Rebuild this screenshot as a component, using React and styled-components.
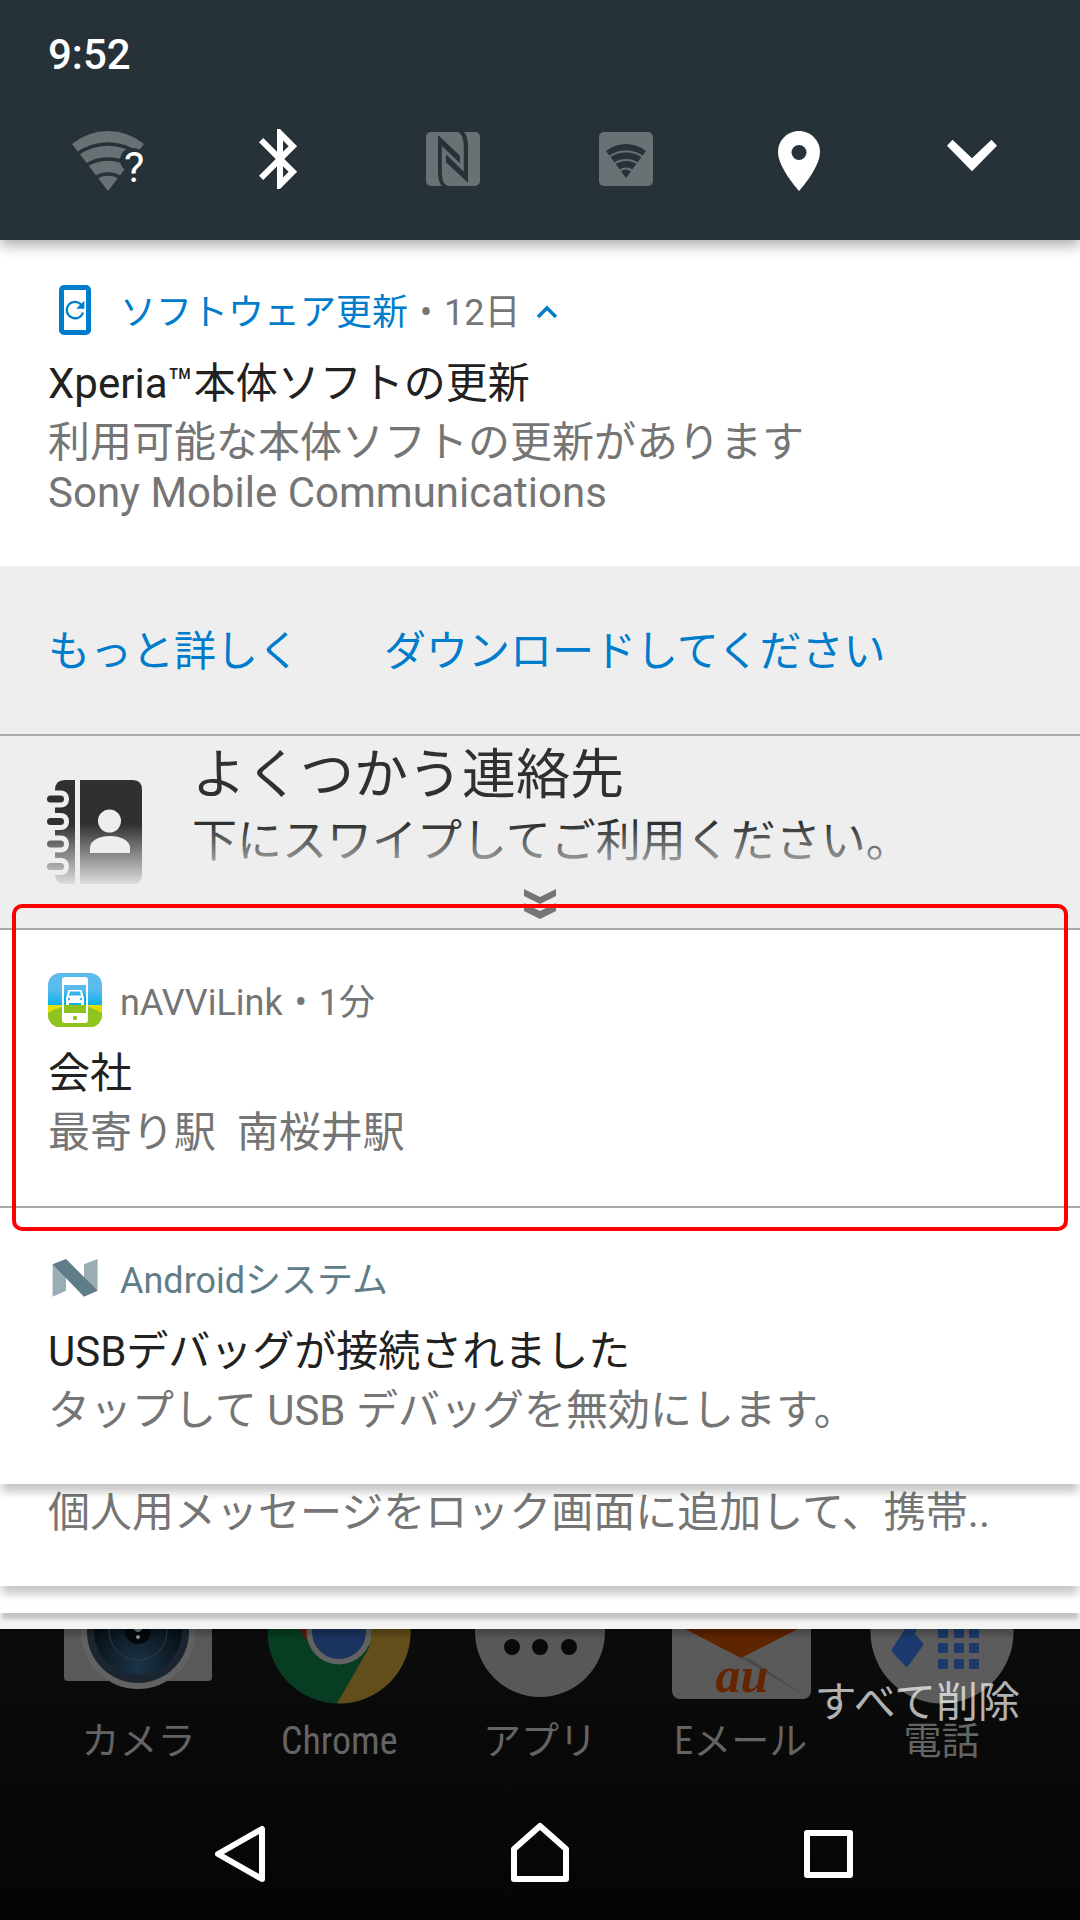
import styled, { createGlobalStyle } from "styled-components";

const App = () => {
    return (
        <Screen>
            <GlobalStyle/>
            <StatusHeader>
                <Clock>9:52</Clock>
                <QuickSettings>
                    <QuickButton type="button" aria-label="Wi-Fi"><WifiIcon/></QuickButton>
                    <QuickButton type="button" aria-label="Bluetooth"><BluetoothIcon/></QuickButton>
                    <QuickButton type="button" aria-label="NFC"><NfcIcon/></QuickButton>
                    <QuickButton type="button" aria-label="テザリング"><HotspotIcon/></QuickButton>
                    <QuickButton type="button" aria-label="位置情報"><LocationIcon/></QuickButton>
                    <QuickButton type="button" aria-label="展開"><ExpandIcon/></QuickButton>
                </QuickSettings>
            </StatusHeader>

            <Stack>
                <Card>
                    <CardHeader>
                        <UpdateIcon/>
                        <AppName $color="#007ccc">ソフトウェア更新</AppName>
                        <Dot>•</Dot>
                        <AppName>12日</AppName>
                        <CollapseButton type="button" aria-label="折りたたむ">
                            <svg width="24" height="14" viewBox="0 0 24 14">
                                <path d="M4 12l9-9 9 9" fill="none" stroke="#007ccc" strokeWidth="3.5"/>
                            </svg>
                        </CollapseButton>
                    </CardHeader>
                    <Title>Xperia™本体ソフトの更新</Title>
                    <Body>利用可能な本体ソフトの更新があります</Body>
                    <Body>Sony Mobile Communications</Body>
                </Card>
                <Actions>
                    <ActionButton type="button">もっと詳しく</ActionButton>
                    <ActionButton type="button">ダウンロードしてください</ActionButton>
                </Actions>

                <Contacts>
                    <ContactsRow>
                        <ContactsIcon/>
                        <ContactsText>
                            <ContactsTitle>よくつかう連絡先</ContactsTitle>
                            <ContactsBody>下にスワイプしてご利用ください。</ContactsBody>
                        </ContactsText>
                    </ContactsRow>
                    <Fade/>
                    <SwipeHint/>
                </Contacts>

                <Card $line>
                    <CardHeader>
                        <NaviIcon/>
                        <AppName>nAVViLink</AppName>
                        <Dot>•</Dot>
                        <AppName>1分</AppName>
                    </CardHeader>
                    <Title>会社</Title>
                    <Body>最寄り駅{"  "}南桜井駅</Body>
                    <Highlight/>
                </Card>

                <Card $raised>
                    <CardHeader>
                        <AndroidIcon/>
                        <AppName $color="#5f7d88">Androidシステム</AppName>
                    </CardHeader>
                    <Title>USBデバッグが接続されました</Title>
                    <Body>タップして USB デバッグを無効にします。</Body>
                </Card>

                <PeekCard>
                    <Body>個人用メッセージをロック画面に追加して、携帯..</Body>
                </PeekCard>
                <Edge $height={27} $color="#fff" $depth={3}/>
                <Edge $height={16} $color="#f3f3f3" $depth={2}/>
            </Stack>

            <Dock>
                <DockItem href="#camera"><CameraIcon/><DockLabel>カメラ</DockLabel></DockItem>
                <DockItem href="#chrome"><ChromeIcon/><DockLabel>Chrome</DockLabel></DockItem>
                <DockItem href="#apps"><AppsIcon/><DockLabel>アプリ</DockLabel></DockItem>
                <DockItem href="#mail"><MailIcon/><DockLabel>Eメール</DockLabel></DockItem>
                <DockItem href="#phone"><PhoneIcon/><DockLabel>電話</DockLabel></DockItem>
                <ClearAll type="button">すべて削除</ClearAll>
            </Dock>

            <NavBar>
                <NavButton type="button" aria-label="戻る">
                    <NavIcon viewBox="0 0 80 80">
                        <path d="M58 15v50L14 40z"/>
                    </NavIcon>
                </NavButton>
                <NavButton type="button" aria-label="ホーム">
                    <NavIcon viewBox="0 0 80 80">
                        <path d="M14 65V35L40 12l26 23v30z"/>
                    </NavIcon>
                </NavButton>
                <NavButton type="button" aria-label="履歴">
                    <NavIcon viewBox="0 0 80 80">
                        <path d="M11 19h43v42H11z"/>
                    </NavIcon>
                </NavButton>
            </NavBar>
        </Screen>
    )
};

export default App;

/* quick settings */

const WifiIcon = () => (
    <QuickSvg viewBox="0 0 72 72">
        <path d="M36 67L0 20Q16 7 36 7T72 20z" fill="#697174"/>
        <g fill="none" stroke="#263238" strokeWidth="3.5">
            <path d="M4 31Q18 20 36 20T68 31"/>
            <path d="M12 43Q22 35 36 35T60 43"/>
            <path d="M22 55Q28 50 36 50T50 55"/>
        </g>
        <circle cx="60" cy="36" r="12" fill="#263238"/>
        <text x="52" y="58" fill="#fff" stroke="#263238" strokeWidth="7" paintOrder="stroke" fontFamily="Roboto, sans-serif" fontSize="43">?</text>
    </QuickSvg>
);

const BluetoothIcon = () => (
    <QuickSvg viewBox="0 0 72 72">
        <path
            transform="translate(-1 -1) scale(3)"
            fill="#fff"
            d="M17.71 7.71L12 2h-1v7.59L6.41 5 5 6.41 10.59 12 5 17.59 6.41 19 11 14.41V22h1l5.710-5.710-4.300-4.290 4.300-4.290zM13 5.830l1.880 1.880L13 9.590V5.830zm1.880 10.460L13 18.170v-3.760l1.880 1.880z"
        />
    </QuickSvg>
);

const NfcIcon = () => (
    <QuickSvg viewBox="0 0 72 72">
        <rect x="8" y="8" width="54" height="54" rx="5" fill="#697174"/>
        <g transform="translate(-1 0)" fill="#263238">
            <path d="M21 11L43 31.700V39.300L24.800 22V46C24.800 55 26 60 31 62H25C22 59 21 54 21 46z"/>
            <path d="M51 58.700L29 38.300V30.300L46.800 47.700V24C46.800 15 45 10 41 8H47C50 11 51 16 51 24z"/>
        </g>
    </QuickSvg>
);

const HotspotIcon = () => (
    <QuickSvg viewBox="0 0 72 72">
        <rect x="9" y="8" width="54" height="54" rx="5" fill="#697174"/>
        <path d="M36 54L16 27Q25 20 36 20T56 27z" fill="#263238"/>
        <g fill="none" stroke="#697174" strokeWidth="2">
            <path d="M19 33Q26 27.500 36 27.500T53 33"/>
            <path d="M24 40Q29 36 36 36T48 40"/>
            <path d="M29 47.500Q32 44.500 36 44.500T43 47.500"/>
        </g>
    </QuickSvg>
);

const LocationIcon = () => (
    <QuickSvg viewBox="0 0 72 72">
        <path d="M36 7C24.400 7 15 16.400 15 28C15 43.750 36 67 36 67S57 43.750 57 28C57 16.400 47.600 7 36 7z" fill="#fff"/>
        <circle cx="36" cy="28.500" r="7.500" fill="#263238"/>
    </QuickSvg>
);

const ExpandIcon = () => (
    <QuickSvg viewBox="0 0 72 72">
        <path d="M16.500 15.700L36 34.300L55.500 15.700L61 21.700L36 47.300L11 21.700z" fill="#fff"/>
    </QuickSvg>
);

/* notification icons */

const UpdateIcon = () => (
    <AppSvg viewBox="0 0 54 54">
        <rect x="13.500" y="4.500" width="27" height="45" rx="2.500" fill="none" stroke="#007ccc" strokeWidth="5"/>
        <path
            transform="translate(13 13) scale(1.170)"
            fill="#007ccc"
            d="M17.650 6.350A7.958 7.958 0 0012 4c-4.420 0-7.990 3.580-7.990 8s3.570 8 7.990 8c3.730 0 6.840-2.550 7.730-6h-2.080A5.990 5.990 0 0112 18c-3.310 0-6-2.690-6-6s2.690-6 6-6c1.660 0 3.140.690 4.220 1.780L13 11h7V4z"
        />
    </AppSvg>
);

const NaviIcon = () => (
    <AppSvg viewBox="0 0 54 54">
        <defs>
            <linearGradient id="sky" x1="0" y1="0" x2="0" y2="1">
                <stop offset="0.3" stopColor="#5bbbec"/>
                <stop offset="0.6" stopColor="#08b0ee"/>
            </linearGradient>
            <clipPath id="tile"><rect width="54" height="54" rx="12"/></clipPath>
        </defs>
        <g clipPath="url(#tile)">
            <rect width="54" height="54" fill="url(#sky)"/>
            <rect y="32" width="54" height="22" fill="#dfe000"/>
            <path d="M0 40Q14 32 27 32T54 40V54H0z" fill="#8fc31f"/>
            <rect x="14" y="4" width="26" height="46" rx="3" fill="#fff"/>
            <rect x="16" y="12" width="22" height="20" fill="url(#sky)"/>
            <rect x="16" y="32" width="22" height="8" fill="#8fc31f"/>
            <circle cx="27" cy="45" r="2.200" fill="#8fc31f"/>
            <path d="M20.500 17h13l2 6 .5 2v7h-3v-2H21v2h-3v-7l.5-2z" fill="#fff"/>
            <path d="M22 18.500h10l1 4H21z" fill="#35b3ec"/>
            <circle cx="21" cy="26" r="1.200" fill="#35b3ec"/>
            <circle cx="33" cy="26" r="1.200" fill="#35b3ec"/>
        </g>
    </AppSvg>
);

const AndroidIcon = () => (
    <AppSvg viewBox="0 0 54 54">
        <path d="M4.600 13.300V45.700L18 39.700V13.300zM36 13.300L49.600 8V39.700L36 40z" fill="#9aacb4"/>
        <path d="M4.600 13.300L18 8L49.600 39.700L36 45.700z" fill="#5f7d88"/>
    </AppSvg>
);

const ContactsIcon = () => (
    <ContactsSvg viewBox="0 0 96 104">
        <path d="M18 0H28V104H18Q8 104 8 94V10Q8 0 18 0z" fill="#2f3131"/>
        <path d="M33 0H86Q95 0 95 10V94Q95 104 86 104H33z" fill="#2f3131"/>
        {[15.5, 38, 60.5, 83].map((y) => (
            <g key={y}>
                <rect x="-6" y={y - 5} width="28" height="17" rx="8" fill="#eee"/>
                <rect x="0" y={y} width="17" height="7" rx="3.500" fill="#2f3131"/>
            </g>
        ))}
        <circle cx="62.500" cy="41" r="11.500" fill="#eee"/>
        <path d="M43 73V68C43 60 53 56 63 56S83 60 83 68V73z" fill="#eee"/>
    </ContactsSvg>
);

const SwipeHint = () => (
    <HintSvg viewBox="0 0 32 30">
        <path d="M0 0L16 8L32 0V7L16 15L0 7zM0 14L16 22L32 14V22L16 30L0 22z" fill="#757575"/>
    </HintSvg>
);

/* dock icons, only their lower halves show under the shade */

const CameraIcon = () => (
    <DockSvg viewBox="-75 0 150 78">
        <defs>
            <radialGradient id="lens" cx="0.5" cy="0.9" r="0.7">
                <stop offset="0" stopColor="#1b3448"/>
                <stop offset="1" stopColor="#05090d"/>
            </radialGradient>
        </defs>
        <rect x="-74" y="-30" width="148" height="82" rx="4" fill="#595959"/>
        <circle cx="0" cy="3" r="57" fill="#626262"/>
        <circle cx="0" cy="3" r="51" fill="#1a252f"/>
        <circle cx="0" cy="2" r="44" fill="url(#lens)"/>
        <circle cx="0" cy="2" r="29" fill="none" stroke="#2a3d4b" strokeWidth="1"/>
        <circle cx="0" cy="2" r="13" fill="#04080b"/>
        <circle cx="0" cy="8" r="2" fill="#8b9296"/>
        <path d="M-4 0h8q-1 3-4 3t-4-3z" fill="#65757c"/>
    </DockSvg>
);

const ChromeIcon = () => (
    <DockSvg viewBox="-75 0 150 78">
        <circle cx="0" cy="3" r="71.500" fill="#073d22"/>
        <path d="M30 0H71.500A71.500 71.500 0 0 1 -2 74.500L30 19z" fill="#624e1a"/>
        <path d="M-40 0H-30L-30 14z" fill="#5e1a0e"/>
        <circle cx="0" cy="3" r="32.500" fill="#626262"/>
        <circle cx="0" cy="3" r="27" fill="#1b345f"/>
    </DockSvg>
);

const AppsIcon = () => (
    <DockSvg viewBox="-75 0 150 78">
        <circle cx="0" cy="3" r="65" fill="#585858"/>
        <g fill="#090909">
            <circle cx="-28" cy="18" r="8"/>
            <circle cx="0" cy="18" r="8"/>
            <circle cx="29" cy="18" r="8"/>
        </g>
    </DockSvg>
);

const MailIcon = () => (
    <DockSvg viewBox="-75 0 150 78">
        <rect x="-69" y="-30" width="139" height="100" rx="8" fill="#5a5a5a"/>
        <path d="M0 29L-64 66" stroke="#535353" strokeWidth="1"/>
        <path d="M0 29L66 68L8 29z" fill="#4a4a4a"/>
        <path d="M-56 0H57L0 29z" fill="#5f2400"/>
        <text x="1" y="63" textAnchor="middle" fill="#652500" fontFamily="'Liberation Serif', serif" fontSize="50" fontWeight="700" fontStyle="italic">au</text>
    </DockSvg>
);

const PhoneIcon = () => (
    <DockSvg viewBox="-75 0 150 78">
        <circle cx="0" cy="3" r="71.500" fill="#5c5c5c"/>
        <path d="M-37 0H-25L-27 5L-19 14Q-18 16 -20 18L-33 36Q-35 39 -37 37L-49 24Q-51 22 -50 20z" fill="#1c3a6e"/>
        {[-1, 14, 30].map((y) => (
            [-4, 12, 27].map((x) => (
                <rect key={`${x}${y}`} x={x} y={y} width="10" height="10" rx="1" fill="#1c3a6e"/>
            ))
        ))}
    </DockSvg>
);

const GlobalStyle = createGlobalStyle`
    * {
        box-sizing: border-box;
    }
    body {
        margin: 0;
        background: #080808;
        font-family: Roboto, "Noto Sans CJK JP", sans-serif;
    }
    button {
        padding: 0;
        border: none;
        background: none;
        font-family: inherit;
        cursor: pointer;
    }
    svg {
        display: block;
        flex: none;
    }
    h2, p {
        margin: 0;
        font-weight: 400;
    }
`;

const Screen = styled.div`
    display: flex;
    flex-direction: column;
    min-height: 100vh;
    overflow: hidden;
`;

const StatusHeader = styled.header`
    position: relative;
    z-index: 10;
    padding: 25px 22px 44px;
    background: #263238;
    box-shadow: 0 6px 12px rgba(0, 0, 0, 0.3);
`;

const Clock = styled.div`
    padding-left: 26px;
    color: #fff;
    font-size: 42px;
    font-weight: 500;
    line-height: 60px;
`;

const QuickSettings = styled.div`
    display: grid;
    grid-template-columns: repeat(6, 1fr);
    margin-top: 39px;
`;

const QuickButton = styled.button`
    display: flex;
    justify-content: center;
`;

const QuickSvg = styled.svg`
    width: 72px;
    height: 72px;
    overflow: visible;
`;

const Stack = styled.main`
    position: relative;
    z-index: 5;
`;

const Card = styled.article`
    position: relative;
    z-index: ${({ $raised }) => ($raised ? 5 : 6)};
    padding: 43px 48px 48px;
    background: #fff;
    border-bottom: ${({ $line }) => ($line ? "2px solid #aaa" : "none")};
    box-shadow: ${({ $raised }) => ($raised ? "0 10px 8px -2px rgba(0, 0, 0, 0.22)" : "none")};
`;

const CardHeader = styled.div`
    display: flex;
    align-items: flex-start;
    height: 60px;
`;

const AppSvg = styled.svg`
    width: 54px;
    height: 54px;
    margin-right: 18px;
`;

const AppName = styled.span`
    color: ${({ $color }) => $color || "#757575"};
    font-size: 36px;
    line-height: 60px;
`;

const Dot = styled(AppName)`
    width: 36px;
    text-align: center;
`;

const CollapseButton = styled.button`
    margin: 22px 0 0 14px;
`;

const Title = styled.h2`
    margin-top: 15px;
    color: #212121;
    font-size: 42px;
    line-height: 52px;

    & + p {
        margin-top: 8px;
    }
`;

const Body = styled.p`
    color: #757575;
    font-size: 42px;
    line-height: 50px;
    white-space: pre;
`;

const Actions = styled.div`
    display: flex;
    gap: 84px;
    padding: 56px 48px 52px;
    background: #eee;
    border-bottom: 2px solid #aaa;
`;

const ActionButton = styled.button`
    color: #007ccc;
    font-size: 42px;
    line-height: 60px;
`;

const Contacts = styled.section`
    position: relative;
    padding-bottom: 9px;
    background: #eee;
    border-bottom: 2px solid #aaa;
`;

const ContactsRow = styled.div`
    display: flex;
    gap: 49px;
    padding: 7px 48px 0 47px;
`;

const ContactsSvg = styled.svg`
    width: 96px;
    height: 104px;
    margin-top: 37px;
`;

const ContactsText = styled.div`
    color: #2f3131;
`;

const ContactsTitle = styled.h2`
    font-size: 54px;
    line-height: 66px;
`;

const ContactsBody = styled.p`
    font-size: 45px;
    line-height: 66px;
`;

const Fade = styled.div`
    position: absolute;
    top: 88px;
    right: 0;
    bottom: 0;
    left: 0;
    background: linear-gradient(rgba(238, 238, 238, 0), #eee 66px);
`;

const HintSvg = styled.svg`
    position: relative;
    width: 32px;
    height: 30px;
    margin: 5px auto 0;
`;

const Highlight = styled.div`
    position: absolute;
    top: -26px;
    right: 12px;
    bottom: -25px;
    left: 12px;
    border: 4px solid #f00;
    border-radius: 10px;
    pointer-events: none;
`;

const PeekCard = styled.article`
    position: relative;
    z-index: 4;
    padding: 4px 48px 48px;
    background: #fff;
    box-shadow: 0 10px 8px -2px rgba(0, 0, 0, 0.22);
`;

const Edge = styled.div`
    position: relative;
    z-index: ${({ $depth }) => $depth};
    height: ${({ $height }) => $height}px;
    background: ${({ $color }) => $color};
    box-shadow: 0 8px 4px -2px rgba(0, 0, 0, 0.2);
`;

const Dock = styled.nav`
    position: relative;
    display: grid;
    grid-template-columns: repeat(5, 1fr);
    padding: 0 38px 14px;
    background: linear-gradient(#0c0c0c, #080808);
`;

const DockItem = styled.a`
    display: flex;
    flex-direction: column;
    align-items: center;
    color: #646464;
    text-decoration: none;
`;

const DockSvg = styled.svg`
    width: 150px;
    height: 78px;
`;

const DockLabel = styled.span`
    margin-top: 9px;
    font-family: "Roboto Condensed", Roboto, "Noto Sans CJK JP", sans-serif;
    font-size: 38px;
    line-height: 50px;
`;

const ClearAll = styled.button`
    position: absolute;
    top: 48px;
    right: 60px;
    color: rgba(255, 255, 255, 0.7);
    font-size: 42px;
    line-height: 52px;
`;

const NavBar = styled.nav`
    display: grid;
    flex: 1;
    grid-template-columns: repeat(3, 1fr);
    align-items: center;
    padding: 33px 96px 26px;
    background: linear-gradient(#080808, #050505);
`;

const NavButton = styled.button`
    display: flex;
    justify-content: center;
`;

const NavIcon = styled.svg`
    width: 80px;
    height: 80px;
    fill: none;
    stroke: #fff;
    stroke-width: 6;
    stroke-linejoin: round;
`;
